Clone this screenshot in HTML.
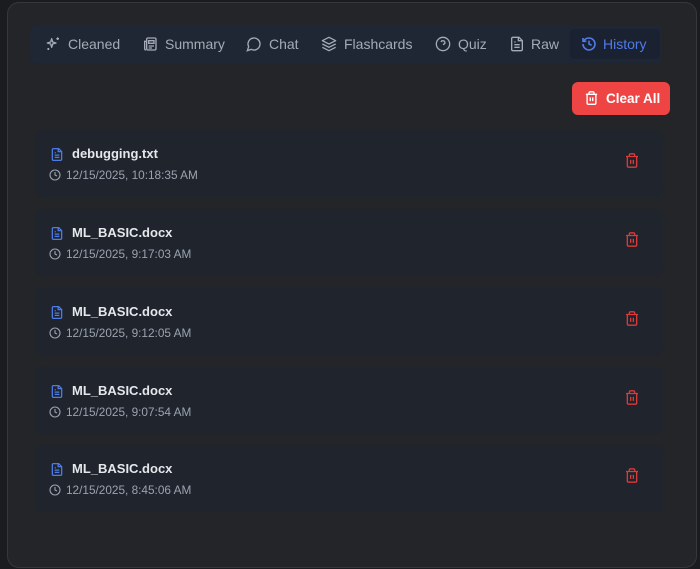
<!DOCTYPE html>
<html><head><meta charset="utf-8"><style>
*{box-sizing:border-box;margin:0;padding:0}
body{width:700px;height:569px;background:#1b1c1f;font-family:"Liberation Sans",sans-serif;position:relative;overflow:hidden}
.panel{position:absolute;left:7px;top:2px;width:690px;height:566px;background:#242529;border:1px solid #36373b;border-radius:12px}
.tabs{position:absolute;left:30px;top:25px;width:632px;height:38px;background:#1f2734;border-radius:5px}
.act{position:absolute;left:570px;top:29px;width:90px;height:30px;background:#1a2130;border-radius:4px}
.t{position:absolute;top:36px;font-size:14px;color:#a4abb6;line-height:16px}
.ic{position:absolute;top:36px;width:16px;height:16px}
.btn{position:absolute;left:572px;top:82px;width:98px;height:33px;background:#ef4444;border-radius:6px;color:#fff;font-weight:bold;font-size:13.5px}
.card{position:absolute;left:35px;width:628px;height:67px;background:#1f242d;border-radius:7px}
.fn{position:absolute;left:37px;top:16px;font-size:13px;font-weight:bold;color:#e5e7eb}
.dt{position:absolute;left:31px;top:38px;font-size:11.8px;color:#9ca3af}
.card svg{position:absolute}
</style></head><body>
<div class="panel"></div>
<div class="tabs"></div>
<div class="act"></div>
<svg class="ic" style="left:45px" viewBox="0 0 24 24" fill="none" stroke="#a4abb6" stroke-width="2" stroke-linejoin="round"><path d="M10 4l1.5 5 5 1.5-5 1.5L10 17l-1.5-5L3.5 10.5l5-1.5z"/><path d="M19 2v4M17 4h4M5 18v3M3.5 19.5h3"/></svg>
<div class="t" style="left:68px">Cleaned</div>
<svg class="ic" style="left:142px" viewBox="0 0 24 24" fill="none" stroke="#a4abb6" stroke-width="2"><rect x="7" y="3" width="14" height="18" rx="2"/><path d="M7 8H4v11a2 2 0 0 0 2 2M10 7h8v4h-8zM10 15h8M10 18h5"/></svg>
<div class="t" style="left:165px">Summary</div>
<svg class="ic" style="left:246px" viewBox="0 0 24 24" fill="none" stroke="#a4abb6" stroke-width="2"><path d="M7.9 20A9 9 0 1 0 4 16.1L2 22z"/></svg>
<div class="t" style="left:269px">Chat</div>
<svg class="ic" style="left:321px" viewBox="0 0 24 24" fill="none" stroke="#a4abb6" stroke-width="2" stroke-linejoin="round"><path d="M12 2l10 5-10 5L2 7z"/><path d="M2 12l10 5 10-5M2 17l10 5 10-5"/></svg>
<div class="t" style="left:344px">Flashcards</div>
<svg class="ic" style="left:435px" viewBox="0 0 24 24" fill="none" stroke="#a4abb6" stroke-width="2"><circle cx="12" cy="12" r="10"/><path d="M9.1 9a3 3 0 0 1 5.8 1c0 2-3 3-3 3M12 17h.01"/></svg>
<div class="t" style="left:458px">Quiz</div>
<svg class="ic" style="left:509px" viewBox="0 0 24 24" fill="none" stroke="#a4abb6" stroke-width="2"><path d="M15 2H6a2 2 0 0 0-2 2v16a2 2 0 0 0 2 2h12a2 2 0 0 0 2-2V7z"/><path d="M14 2v5h5M16 13H8M16 17H8M10 9H8"/></svg>
<div class="t" style="left:531px">Raw</div>
<svg class="ic" style="left:581px" viewBox="0 0 24 24" fill="none" stroke="#4f7be8" stroke-width="2.4"><path d="M3 12a9 9 0 1 0 9-9 9.75 9.75 0 0 0-6.74 2.74L3 8"/><path d="M3 3v5h5M12 7v5l4 2"/></svg>
<div class="t" style="left:603px;color:#4f7be8">History</div>
<div class="btn"><svg style="position:absolute;left:12px;top:8px" width="15" height="16" viewBox="0 0 24 24" fill="none" stroke="#fff" stroke-width="2.2"><path d="M3 6h18M19 6v14a2 2 0 0 1-2 2H7a2 2 0 0 1-2-2V6M8 6V4a2 2 0 0 1 2-2h4a2 2 0 0 1 2 2v2M10 11v6M14 11v6"/></svg><span style="position:absolute;left:34px;top:9px">Clear All</span></div>

<div class="card" style="top:130px"><svg style="left:15px;top:17px" width="14" height="15" viewBox="0 0 24 24" fill="none" stroke="#4f7be8" stroke-width="2.2"><path d="M15 2H6a2 2 0 0 0-2 2v16a2 2 0 0 0 2 2h12a2 2 0 0 0 2-2V7z"/><path d="M14 2v5h5M16 13H8M16 17H8M10 9H8"/></svg><div class="fn">debugging.txt</div><svg style="left:14px;top:39px" width="12" height="12" viewBox="0 0 24 24" fill="none" stroke="#9ca3af" stroke-width="2.2"><circle cx="12" cy="12" r="10"/><path d="M12 6v6l4 2"/></svg><div class="dt">12/15/2025, 10:18:35 AM</div><svg style="left:589px;top:22px" width="16" height="17" viewBox="0 0 24 24" fill="none" stroke="#dc3a3a" stroke-width="2"><path d="M3 6h18M19 6v14a2 2 0 0 1-2 2H7a2 2 0 0 1-2-2V6M8 6V4a2 2 0 0 1 2-2h4a2 2 0 0 1 2 2v2M10 11v6M14 11v6"/></svg></div>
<div class="card" style="top:209px"><svg style="left:15px;top:17px" width="14" height="15" viewBox="0 0 24 24" fill="none" stroke="#4f7be8" stroke-width="2.2"><path d="M15 2H6a2 2 0 0 0-2 2v16a2 2 0 0 0 2 2h12a2 2 0 0 0 2-2V7z"/><path d="M14 2v5h5M16 13H8M16 17H8M10 9H8"/></svg><div class="fn">ML_BASIC.docx</div><svg style="left:14px;top:39px" width="12" height="12" viewBox="0 0 24 24" fill="none" stroke="#9ca3af" stroke-width="2.2"><circle cx="12" cy="12" r="10"/><path d="M12 6v6l4 2"/></svg><div class="dt">12/15/2025, 9:17:03 AM</div><svg style="left:589px;top:22px" width="16" height="17" viewBox="0 0 24 24" fill="none" stroke="#dc3a3a" stroke-width="2"><path d="M3 6h18M19 6v14a2 2 0 0 1-2 2H7a2 2 0 0 1-2-2V6M8 6V4a2 2 0 0 1 2-2h4a2 2 0 0 1 2 2v2M10 11v6M14 11v6"/></svg></div>
<div class="card" style="top:288px"><svg style="left:15px;top:17px" width="14" height="15" viewBox="0 0 24 24" fill="none" stroke="#4f7be8" stroke-width="2.2"><path d="M15 2H6a2 2 0 0 0-2 2v16a2 2 0 0 0 2 2h12a2 2 0 0 0 2-2V7z"/><path d="M14 2v5h5M16 13H8M16 17H8M10 9H8"/></svg><div class="fn">ML_BASIC.docx</div><svg style="left:14px;top:39px" width="12" height="12" viewBox="0 0 24 24" fill="none" stroke="#9ca3af" stroke-width="2.2"><circle cx="12" cy="12" r="10"/><path d="M12 6v6l4 2"/></svg><div class="dt">12/15/2025, 9:12:05 AM</div><svg style="left:589px;top:22px" width="16" height="17" viewBox="0 0 24 24" fill="none" stroke="#dc3a3a" stroke-width="2"><path d="M3 6h18M19 6v14a2 2 0 0 1-2 2H7a2 2 0 0 1-2-2V6M8 6V4a2 2 0 0 1 2-2h4a2 2 0 0 1 2 2v2M10 11v6M14 11v6"/></svg></div>
<div class="card" style="top:367px"><svg style="left:15px;top:17px" width="14" height="15" viewBox="0 0 24 24" fill="none" stroke="#4f7be8" stroke-width="2.2"><path d="M15 2H6a2 2 0 0 0-2 2v16a2 2 0 0 0 2 2h12a2 2 0 0 0 2-2V7z"/><path d="M14 2v5h5M16 13H8M16 17H8M10 9H8"/></svg><div class="fn">ML_BASIC.docx</div><svg style="left:14px;top:39px" width="12" height="12" viewBox="0 0 24 24" fill="none" stroke="#9ca3af" stroke-width="2.2"><circle cx="12" cy="12" r="10"/><path d="M12 6v6l4 2"/></svg><div class="dt">12/15/2025, 9:07:54 AM</div><svg style="left:589px;top:22px" width="16" height="17" viewBox="0 0 24 24" fill="none" stroke="#dc3a3a" stroke-width="2"><path d="M3 6h18M19 6v14a2 2 0 0 1-2 2H7a2 2 0 0 1-2-2V6M8 6V4a2 2 0 0 1 2-2h4a2 2 0 0 1 2 2v2M10 11v6M14 11v6"/></svg></div>
<div class="card" style="top:445px"><svg style="left:15px;top:17px" width="14" height="15" viewBox="0 0 24 24" fill="none" stroke="#4f7be8" stroke-width="2.2"><path d="M15 2H6a2 2 0 0 0-2 2v16a2 2 0 0 0 2 2h12a2 2 0 0 0 2-2V7z"/><path d="M14 2v5h5M16 13H8M16 17H8M10 9H8"/></svg><div class="fn">ML_BASIC.docx</div><svg style="left:14px;top:39px" width="12" height="12" viewBox="0 0 24 24" fill="none" stroke="#9ca3af" stroke-width="2.2"><circle cx="12" cy="12" r="10"/><path d="M12 6v6l4 2"/></svg><div class="dt">12/15/2025, 8:45:06 AM</div><svg style="left:589px;top:22px" width="16" height="17" viewBox="0 0 24 24" fill="none" stroke="#dc3a3a" stroke-width="2"><path d="M3 6h18M19 6v14a2 2 0 0 1-2 2H7a2 2 0 0 1-2-2V6M8 6V4a2 2 0 0 1 2-2h4a2 2 0 0 1 2 2v2M10 11v6M14 11v6"/></svg></div>
</body></html>
